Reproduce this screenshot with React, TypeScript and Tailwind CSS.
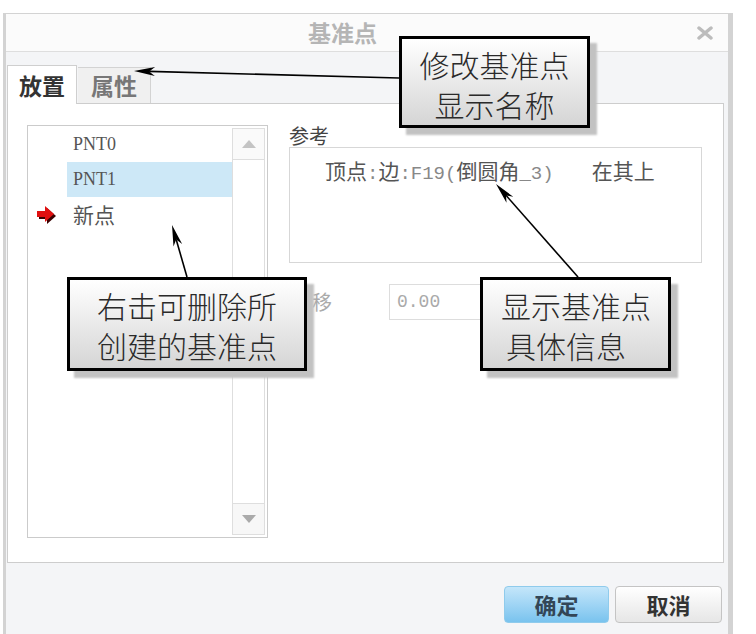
import React from "react";

type Pt = [number, number];

// annotation arrows drawn over the dialog (from callout edge to target)
const arrows: { from: Pt; to: Pt }[] = [
  { from: [399, 78], to: [134, 71] },
  { from: [187, 277], to: [172, 225] },
  { from: [578, 277], to: [496, 184] },
];

const headPoints = (from: Pt, to: Pt) => {
  const dx = to[0] - from[0];
  const dy = to[1] - from[1];
  const len = Math.hypot(dx, dy);
  const ux = dx / len;
  const uy = dy / len;
  const px = -uy;
  const py = ux;
  const L = 21;
  const W = 4.5;
  const bx = to[0] - ux * L;
  const by = to[1] - uy * L;
  const nx = to[0] - ux * L * 0.72;
  const ny = to[1] - uy * L * 0.72;
  return {
    poly: `${to[0]},${to[1]} ${bx + px * W},${by + py * W} ${nx},${ny} ${bx - px * W},${by - py * W}`,
    end: [nx, ny] as Pt,
  };
};

const Callout: React.FC<{ className: string; children: React.ReactNode }> = ({ className, children }) => (
  <div
    className={`absolute border-[3px] border-black bg-linear-to-b from-white to-[#d5d5d5] shadow-[7px_7px_2px_#c2c2c2] text-[30px] leading-[40px] font-light text-[#2a2a2a] font-['Noto_Sans_CJK_SC',sans-serif] ${className}`}
  >
    {children}
  </div>
);

const cjk = "font-['Noto_Sans_CJK_SC',sans-serif]";
const mono = "font-['Liberation_Mono','Noto_Sans_CJK_SC',monospace]";

export default function App() {
  return (
    <div className={`relative w-[756px] h-[634px] overflow-hidden bg-white ${cjk}`}>
      {/* dialog */}
      <div className="ml-[3px] mt-[13px] w-[730px] h-[621px] flex flex-col border-t border-l-[3px] border-r-[5px] border-[#d3d3d3] bg-[#f4f5f7]">
        {/* title bar */}
        <div className="h-[38px] shrink-0 flex items-center bg-[#fbfbfb] border-b border-[#dedede]">
          <span className="ml-[302px] text-[23px] font-bold text-[#b5b5b5] leading-none">基准点</span>
          <svg className="ml-auto mr-[15px]" width="16" height="14" viewBox="0 0 16 14">
            <path d="M2 2 L14 12 M14 2 L2 12" stroke="#bcbcbc" strokeWidth="3.5" strokeLinecap="round" />
          </svg>
        </div>

        {/* tabs */}
        <div className="h-[51px] shrink-0 flex items-end pl-[1px]">
          <div className="relative z-10 -mb-px h-[39px] w-[70px] flex items-center justify-center bg-white border-t border-l border-r border-[#cfcfcf] text-[23px] font-bold text-[#333]">
            放置
          </div>
          <div className="h-[36px] w-[73px] ml-[1px] flex items-center justify-center bg-[#f0f0f0] border-t border-r border-[#d3d3d3] text-[23px] font-bold text-[#777]">
            属性
          </div>
        </div>

        {/* content panel */}
        <div className="h-[460px] shrink-0 ml-[1px] mr-[4px] bg-white border border-[#cdcdcd] flex pt-[21px] pl-[19px]">
          {/* point list */}
          <div className="w-[241px] h-[413px] border border-[#cbcbcb] flex">
            <div className="flex-1 pt-[1px] flex flex-col">
              <div className="h-[35px] flex items-center">
                <div className="w-[39px]" />
                <div className="flex-1 h-full flex items-center pl-[6px] text-[18px] text-[#555] font-['Liberation_Serif',serif]">PNT0</div>
              </div>
              <div className="h-[35px] flex items-center">
                <div className="w-[39px]" />
                <div className="flex-1 h-full flex items-center pl-[6px] bg-[#cde8f7] text-[18px] text-[#555] font-['Liberation_Serif',serif]">PNT1</div>
              </div>
              <div className="h-[35px] flex items-center">
                <div className="w-[39px] pl-[9px] flex items-center">
                  <svg width="20" height="19" viewBox="0 0 20 19">
                    <polygon points="2,8 10,8 10,3 19,11 10,19 10,14 2,14" fill="#3a0000" />
                    <polygon points="0,6 8,6 8,1 17,9 8,17 8,12 0,12" fill="#e01010" />
                  </svg>
                </div>
                <div className="flex-1 h-full flex items-center pl-[6px] text-[21px] text-[#555]">新点</div>
              </div>
            </div>
            {/* scrollbar */}
            <div className="w-[33px] my-[2px] mr-[2px] border border-[#dedede] flex flex-col">
              <div className="h-[31px] border-b border-[#dedede] flex items-center justify-center bg-[#fafafa]">
                <svg width="14" height="8" viewBox="0 0 14 8">
                  <polygon points="7,0 14,8 0,8" fill="#c4c4c4" />
                </svg>
              </div>
              <div className="flex-1" />
              <div className="h-[31px] border-t border-[#dedede] flex items-center justify-center bg-[#f7f7f7]">
                <svg width="14" height="8" viewBox="0 0 14 8">
                  <polygon points="0,0 14,0 7,8" fill="#aaaaaa" />
                </svg>
              </div>
            </div>
          </div>

          {/* reference details */}
          <div className="ml-[21px] flex flex-col">
            <div className="h-[22px] text-[20px] leading-[22px] text-[#444]">参考</div>
            <div className="w-[413px] h-[116px] border border-[#d7d7d7] pt-[10px] pl-[35px] leading-[24px] text-[#555] whitespace-nowrap">
              <span className="text-[21px]">顶点</span>
              <span className={`${mono} text-[19px] text-[#888]`}>:</span>
              <span className="text-[21px]">边</span>
              <span className={`${mono} text-[19px] text-[#888]`}>:F19(</span>
              <span className="text-[21px]">倒圆角</span>
              <span className={`${mono} text-[19px] text-[#888]`}>_3)</span>
              <span className="inline-block w-[38px]" />
              <span className="text-[21px]">在其上</span>
            </div>
            <div className="mt-[21px] flex items-center">
              <span className="ml-[3px] text-[20px] text-[#aaa]">偏移</span>
              <div className={`ml-[57px] w-[170px] h-[36px] border border-[#dddddd] flex items-center pl-[7px] text-[18px] text-[#aaa] ${mono}`}>
                0.00
              </div>
            </div>
          </div>
        </div>

        {/* footer */}
        <div className="flex-1 flex items-start justify-end gap-[6px] pt-[23px] pr-[6px]">
          <button className="w-[105px] h-[37px] rounded-[4px] border border-[#8fcbec] bg-linear-to-b from-[#c4e6fa] to-[#79c3ee] text-[22px] font-bold text-[#334657]">
            确定
          </button>
          <button className="w-[107px] h-[37px] rounded-[4px] border border-[#c4c4c4] bg-linear-to-b from-white to-[#e6e6e6] text-[22px] font-bold text-[#333]">
            取消
          </button>
        </div>
      </div>

      {/* annotation arrows */}
      <svg className="absolute inset-0 pointer-events-none" width="756" height="634">
        {arrows.map((a, i) => {
          const h = headPoints(a.from, a.to);
          return (
            <g key={i}>
              <line x1={a.from[0]} y1={a.from[1]} x2={h.end[0]} y2={h.end[1]} stroke="#000" strokeWidth="1.6" />
              <polygon points={h.poly} fill="#000" />
            </g>
          );
        })}
      </svg>

      {/* callouts */}
      <Callout className="left-[399px] top-[36px] w-[191px] h-[92px] pt-[5px] text-center">
        <div>修改基准点</div>
        <div>显示名称</div>
      </Callout>
      <Callout className="left-[67px] top-[277px] w-[240px] h-[94px] pt-[5px] text-center">
        <div>右击可删除所</div>
        <div>创建的基准点</div>
      </Callout>
      <Callout className="left-[480px] top-[277px] w-[191px] h-[94px] pt-[5px] pl-[18px]">
        <div>显示基准点</div>
        <div className="pl-[5px]">具体信息</div>
      </Callout>
    </div>
  );
}
